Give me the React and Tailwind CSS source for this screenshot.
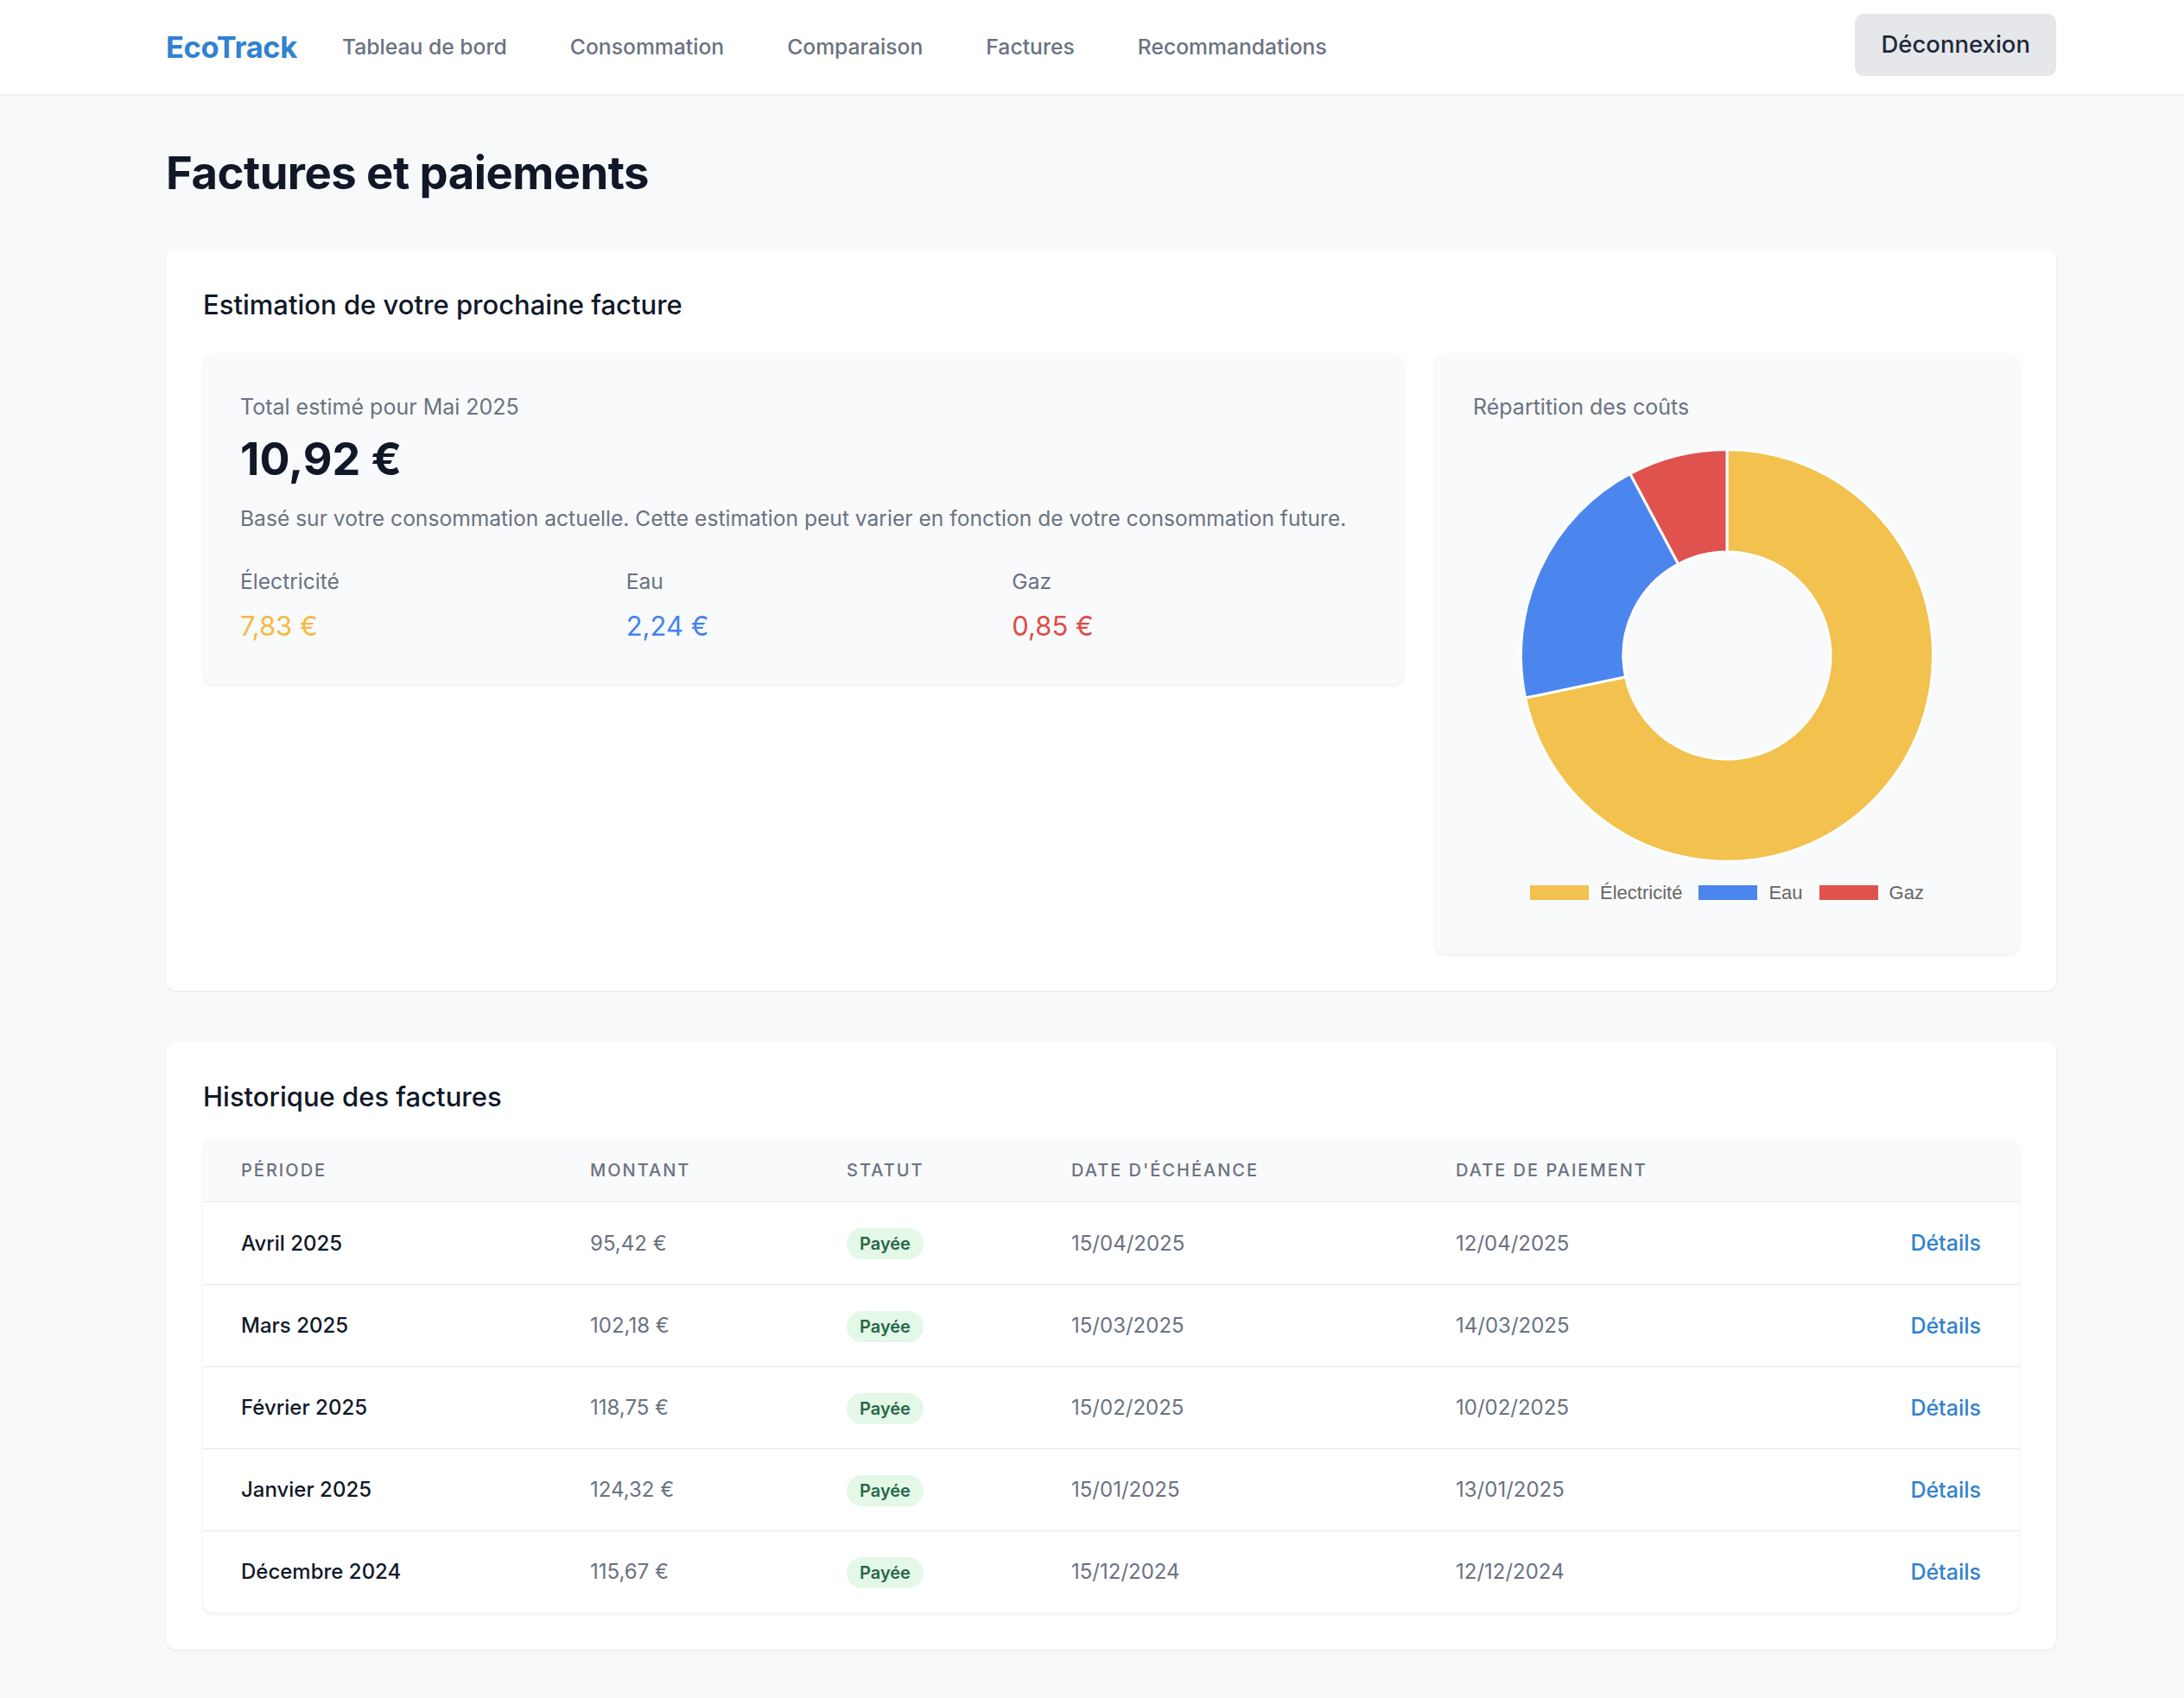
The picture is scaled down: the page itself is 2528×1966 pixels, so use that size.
import React from "react";

const costs = [
  { label: "Électricité", value: 7.83, text: "7,83 €", color: "#f2c14e", textClass: "text-[#f4b942]" },
  { label: "Eau", value: 2.24, text: "2,24 €", color: "#4b86ee", textClass: "text-[#4483ee]" },
  { label: "Gaz", value: 0.85, text: "0,85 €", color: "#df524e", textClass: "text-[#e04b48]" },
];

const invoices = [
  { period: "Avril 2025", amount: "95,42 €", due: "15/04/2025", paid: "12/04/2025" },
  { period: "Mars 2025", amount: "102,18 €", due: "15/03/2025", paid: "14/03/2025" },
  { period: "Février 2025", amount: "118,75 €", due: "15/02/2025", paid: "10/02/2025" },
  { period: "Janvier 2025", amount: "124,32 €", due: "15/01/2025", paid: "13/01/2025" },
  { period: "Décembre 2024", amount: "115,67 €", due: "15/12/2024", paid: "12/12/2024" },
];

function arcPath(cx, cy, R, r, a0, a1) {
  const p = (rad, a) => [cx + rad * Math.cos(a), cy + rad * Math.sin(a)];
  const large = a1 - a0 > Math.PI ? 1 : 0;
  const [x0, y0] = p(R, a0);
  const [x1, y1] = p(R, a1);
  const [x2, y2] = p(r, a1);
  const [x3, y3] = p(r, a0);
  return `M${x0} ${y0} A${R} ${R} 0 ${large} 1 ${x1} ${y1} L${x2} ${y2} A${r} ${r} 0 ${large} 0 ${x3} ${y3} Z`;
}

function Donut() {
  const total = costs.reduce((s, c) => s + c.value, 0);
  let a = -Math.PI / 2;
  return (
    <svg width="480" height="480" viewBox="0 0 480 480">
      {costs.map((c) => {
        const a1 = a + (c.value / total) * Math.PI * 2;
        const d = arcPath(240, 240, 238.5, 120, a, a1);
        a = a1;
        return <path key={c.label} d={d} fill={c.color} stroke="#fff" strokeWidth="3" strokeLinejoin="round" />;
      })}
    </svg>
  );
}

const navItems = ["Tableau de bord", "Consommation", "Comparaison", "Factures", "Recommandations"];

export default function App() {
  return (
    <div className="min-h-screen bg-[#f8f9fb] pb-[53px] font-['Inter',sans-serif] text-gray-900">
      <nav className="h-[109px] bg-white shadow-[0_1px_3px_rgba(0,0,0,0.07)] pl-[192px] pr-[148px] flex items-center justify-between">
        <div className="flex items-center">
          <span className="text-[34.5px] font-bold text-[#3182ce] tracking-[-0.01em]">EcoTrack</span>
          <div className="ml-[52px] flex items-center gap-[73px]">
            {navItems.map((n) => (
              <a key={n} className="text-[24.7px] text-gray-500 font-medium">{n}</a>
            ))}
          </div>
        </div>
        <button className="h-[72px] mb-[5px] px-[30px] rounded-[10px] bg-gray-200 text-[27.5px] font-medium text-gray-800">
          Déconnexion
        </button>
      </nav>

      <main className="pl-[192px] pr-[148px] pt-[60px]">
        <h1 className="text-[52.6px] leading-[1.2] font-bold tracking-[-0.01em] text-gray-900 mb-[56px]">Factures et paiements</h1>

        <section className="bg-white rounded-[12px] shadow-[0_1px_3px_rgba(0,0,0,0.08)] p-[43px]">
          <h2 className="text-[31px] leading-[1.4] font-medium text-gray-900 mb-[34px]">Estimation de votre prochaine facture</h2>
          <div className="grid grid-cols-3 gap-[37px] items-start">
            <div className="col-span-2 bg-gray-50 rounded-[12px] shadow-[0_2px_4px_rgba(0,0,0,0.07)] px-[43px] pt-[44px] pb-[43px]">
              <p className="text-[25px] leading-[1.5] text-gray-500">Total estimé pour Mai 2025</p>
              <p className="text-[52px] leading-[1.2] font-bold text-gray-900 mt-[11px]">10,92 €</p>
              <p className="text-[24.6px] leading-[1.5] text-gray-500 mt-[19px]">
                Basé sur votre consommation actuelle. Cette estimation peut varier en fonction de votre consommation future.
              </p>
              <div className="grid grid-cols-3 gap-[37px] mt-[36px]">
                {costs.map((c) => (
                  <div key={c.label}>
                    <p className="text-[24.6px] leading-[1.5] text-gray-500">{c.label}</p>
                    <p className={`text-[31px] leading-[1.5] mt-[10px] ${c.textClass}`}>{c.text}</p>
                  </div>
                ))}
              </div>
            </div>

            <div className="bg-gray-50 rounded-[12px] shadow-[0_2px_4px_rgba(0,0,0,0.07)] px-[44px] pt-[44px] pb-[54px] flex flex-col">
              <p className="text-[25px] leading-[1.5] text-gray-500">Répartition des coûts</p>
              <div className="mt-[29px] flex justify-center">
                <Donut />
              </div>
              <div className="mt-[18px] flex justify-center items-center gap-[19px] font-['Liberation_Sans',sans-serif] text-[22px] text-[#666]">
                {costs.map((c) => (
                  <div key={c.label} className="flex items-center gap-[13px]">
                    <span className="w-[68px] h-[17px]" style={{ background: c.color }} />
                    <span>{c.label}</span>
                  </div>
                ))}
              </div>
            </div>
          </div>
        </section>

        <section className="mt-[59px] bg-white rounded-[12px] shadow-[0_1px_3px_rgba(0,0,0,0.08)] p-[43px]">
          <h2 className="text-[31px] leading-[1.4] font-medium text-gray-900 mb-[27px] -mt-[1px]">Historique des factures</h2>
          <div className="rounded-[12px] overflow-hidden shadow-[0_2px_4px_rgba(0,0,0,0.08)] bg-white">
            <div className="h-[74px] bg-gray-50 border-b border-gray-200 px-[44px] grid grid-cols-[404px_297px_260px_445px_1fr_auto] items-center text-[20px] uppercase tracking-[0.1em] font-medium text-gray-500">
              <span>Période</span>
              <span>Montant</span>
              <span>Statut</span>
              <span>Date d'échéance</span>
              <span>Date de paiement</span>
              <span />
            </div>
            {invoices.map((r, i) => (
              <div
                key={r.period}
                className={`h-[95px] px-[44px] grid grid-cols-[404px_297px_260px_445px_1fr_auto] items-center text-[24px] ${i > 0 ? "border-t border-gray-200" : ""}`}
              >
                <span className="font-medium text-gray-900">{r.period}</span>
                <span className="text-gray-500">{r.amount}</span>
                <span>
                  <span className="inline-flex items-center h-[36px] px-[15px] rounded-full bg-[#e3f8e7] text-[#276749] text-[20px] font-semibold">Payée</span>
                </span>
                <span className="text-gray-500">{r.due}</span>
                <span className="text-gray-500">{r.paid}</span>
                <a className="text-[#3182ce] font-medium text-[25px]">Détails</a>
              </div>
            ))}
          </div>
        </section>
      </main>
    </div>
  );
}
